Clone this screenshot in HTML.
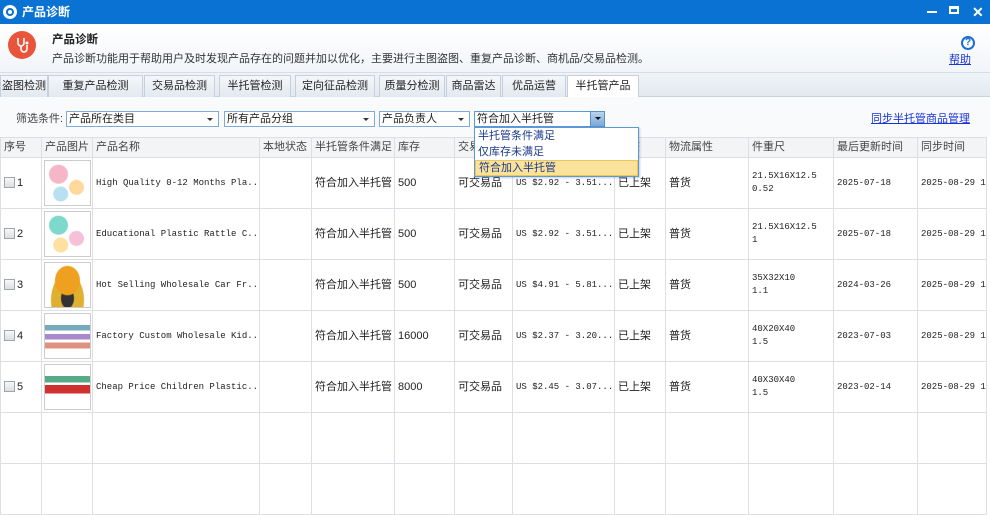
<!DOCTYPE html>
<html><head><meta charset="utf-8"><style>
*{margin:0;padding:0;box-sizing:border-box}
body{width:990px;height:495px;overflow:hidden;background:#fff;font-family:"Liberation Sans","Noto Sans CJK SC",sans-serif;font-size:11px;line-height:14px;color:#222;position:relative}
.abs{position:absolute;white-space:nowrap}
.title{left:0;top:0;width:990px;height:24px;background:#0a72d2;color:#fff;font-size:12px}
.hdr{left:0;top:24px;width:990px;height:49px;background:linear-gradient(#fff,#f1f5f9);border-bottom:1px solid #d5dee8}
.tabs{left:0;top:73px;width:990px;height:24px;background:linear-gradient(#f0f4f8,#e2e9f0);border-bottom:1px solid #c7d3df}
.tab{position:absolute;top:2px;height:22px;background:linear-gradient(#f4f7fa,#e3e9f0);border:1px solid #c5d0dc;border-bottom:none;text-align:center;line-height:21px;font-size:11px;white-space:nowrap;overflow:hidden}
.tab.on{background:#fff;height:23px}
.filt{left:0;top:97px;width:990px;height:40px;background:#f8fafc}
.sel{position:absolute;top:111px;height:16px;background:#fff;border:1px solid #7fa9d6;font-size:11px;line-height:14px;padding-left:2px;white-space:nowrap}
.sel:after{content:"";position:absolute;right:5px;top:6px;border:3px solid transparent;border-top:3px solid #333}
table{position:absolute;left:0;top:137px;border-collapse:collapse;table-layout:fixed;width:986px}
td,th{border:1px solid #dcdfe3;font-weight:normal;text-align:left;padding:0 0 0 3px;white-space:nowrap;overflow:hidden;font-size:11px;line-height:13px}
th{height:20px;background:#f3f4f6;color:#444}
td{height:51px}
.m{font-family:"Liberation Mono",monospace;font-size:9px;text-overflow:clip}
.cb{display:inline-block;width:11px;height:11px;border:1px solid #9aa;background:linear-gradient(#f8f8f8,#ddd);vertical-align:-2px;margin-right:2px}
.img{width:47px;height:46px;border:1px solid #ccc;margin-left:-1px;background:#fff;position:relative;overflow:hidden}
</style></head><body>
<div class="abs title">
 <div class="abs" style="left:3px;top:5px;width:14px;height:14px;border-radius:50%;background:#fff"></div>
 <div class="abs" style="left:6px;top:8px;width:8px;height:8px;border-radius:50%;border:2px solid #0a72d2"></div>
 <div class="abs" style="left:22px;top:4px;font-weight:bold;line-height:16px">产品诊断</div>
 <div class="abs" style="left:927px;top:11px;width:10px;height:2px;background:#fff"></div>
 <div class="abs" style="left:949px;top:6px;width:10px;height:8px;border:2px solid #fff;border-top-width:3px"></div>
 <div class="abs" style="left:972px;top:4px;font-size:14px;line-height:16px;font-weight:bold">✕</div>
</div>
<div class="abs hdr">
 <div class="abs" style="left:8px;top:7px;width:28px;height:28px;border-radius:50%;background:#e8553a"></div>
 <svg class="abs" style="left:13px;top:12px" width="18" height="18" viewBox="0 0 18 18"><path d="M5 2v5a3 3 0 0 0 6 0V2M8 10v3a3 3 0 0 0 6 0v-4" fill="none" stroke="#fff" stroke-width="1.6"/><circle cx="14" cy="7" r="1.5" fill="#fff"/></svg>
 <div class="abs" style="left:52px;top:9px;font-weight:bold;font-size:11.5px">产品诊断</div>
 <div class="abs" style="left:52px;top:28px;font-size:11px;color:#333">产品诊断功能用于帮助用户及时发现产品存在的问题并加以优化，主要进行主图盗图、重复产品诊断、商机品/交易品检测。</div>
 <div class="abs" style="left:961px;top:12px;width:14px;height:14px;border-radius:50%;border:2px solid #1c6ed1;color:#1c6ed1;font-size:10px;font-weight:bold;text-align:center;line-height:10px">?</div>
 <div class="abs" style="left:949px;top:29px;color:#1a33d6;text-decoration:underline;font-size:11px">帮助</div>
</div>
<div class="abs tabs">
 <div class="tab" style="left:0;width:48px">盗图检测</div>
 <div class="tab" style="left:48px;width:95px">重复产品检测</div>
 <div class="tab" style="left:144px;width:71px">交易品检测</div>
 <div class="tab" style="left:219px;width:72px">半托管检测</div>
 <div class="tab" style="left:295px;width:80px">定向征品检测</div>
 <div class="tab" style="left:379px;width:66px">质量分检测</div>
 <div class="tab" style="left:446px;width:55px">商品雷达</div>
 <div class="tab" style="left:502px;width:64px">优品运营</div>
 <div class="tab on" style="left:567px;width:72px">半托管产品</div>
</div>
<div class="abs filt"></div>
<div class="abs" style="left:16px;top:112px;color:#444">筛选条件:</div>
<div class="sel" style="left:66px;width:153px">产品所在类目</div>
<div class="sel" style="left:224px;width:151px">所有产品分组</div>
<div class="sel" style="left:379px;width:91px">产品负责人</div>
<div class="sel" style="left:474px;width:131px;border-color:#5b9ad8">符合加入半托管</div>
<div class="abs" style="left:590px;top:111px;width:15px;height:16px;background:linear-gradient(#b9d4ee,#7aa9d8);border:1px solid #5b8fc8"></div>
<div class="abs" style="left:595px;top:117px;border:3px solid transparent;border-top:3px solid #111"></div>
<div class="abs" style="left:871px;top:112px;color:#1a33d6;text-decoration:underline;font-size:11px">同步半托管商品管理</div>
<table>
<colgroup><col style="width:41px"><col style="width:51px"><col style="width:167px"><col style="width:52px"><col style="width:83px"><col style="width:60px"><col style="width:58px"><col style="width:102px"><col style="width:51px"><col style="width:83px"><col style="width:85px"><col style="width:84px"><col style="width:69px"></colgroup>
<tr><th>序号</th><th>产品图片</th><th>产品名称</th><th>本地状态</th><th>半托管条件满足</th><th>库存</th><th>交易</th><th>价格</th><th>状态</th><th>物流属性</th><th>件重尺</th><th>最后更新时间</th><th>同步时间</th></tr>
<tr><td><span class="cb"></span>1</td><td><div class="img" style="background:radial-gradient(circle at 30% 30%,#f5b6c8 0 9px,transparent 10px),radial-gradient(circle at 70% 60%,#ffd89c 0 7px,transparent 8px),radial-gradient(circle at 35% 75%,#b8e0f0 0 7px,transparent 8px),#fff"></div></td><td class="m">High Quality 0-12 Months Pla...</td><td></td><td>符合加入半托管</td><td>500</td><td>可交易品</td><td class="m">US $2.92 - 3.51...</td><td>已上架</td><td>普货</td><td class="m">21.5X16X12.5<br>0.52</td><td class="m">2025-07-18</td><td class="m">2025-08-29 16</td></tr>
<tr><td><span class="cb"></span>2</td><td><div class="img" style="background:radial-gradient(circle at 30% 30%,#7fd8cc 0 9px,transparent 10px),radial-gradient(circle at 70% 60%,#f6c0d8 0 7px,transparent 8px),radial-gradient(circle at 35% 75%,#ffe0a0 0 7px,transparent 8px),#fff"></div></td><td class="m">Educational Plastic Rattle C...</td><td></td><td>符合加入半托管</td><td>500</td><td>可交易品</td><td class="m">US $2.92 - 3.51...</td><td>已上架</td><td>普货</td><td class="m">21.5X16X12.5<br>1</td><td class="m">2025-07-18</td><td class="m">2025-08-29 16</td></tr>
<tr><td><span class="cb"></span>3</td><td><div class="img" style="background:radial-gradient(ellipse at 50% 40%,#f0a020 0 12px,transparent 13px),radial-gradient(ellipse at 50% 80%,#333 0 6px,transparent 7px),radial-gradient(ellipse at 50% 85%,#e0b030 0 16px,transparent 17px),#fff"></div></td><td class="m">Hot Selling Wholesale Car Fr...</td><td></td><td>符合加入半托管</td><td>500</td><td>可交易品</td><td class="m">US $4.91 - 5.81...</td><td>已上架</td><td>普货</td><td class="m">35X32X10<br>1.1</td><td class="m">2024-03-26</td><td class="m">2025-08-29 16</td></tr>
<tr><td><span class="cb"></span>4</td><td><div class="img" style="background:linear-gradient(#fff 25%,#7ab 25% 38%,#fff 38% 45%,#a8c 45% 58%,#fff 58% 65%,#e09080 65% 78%,#fff 78%)"></div></td><td class="m">Factory Custom Wholesale Kid...</td><td></td><td>符合加入半托管</td><td>16000</td><td>可交易品</td><td class="m">US $2.37 - 3.20...</td><td>已上架</td><td>普货</td><td class="m">40X20X40<br>1.5</td><td class="m">2023-07-03</td><td class="m">2025-08-29 16</td></tr>
<tr><td><span class="cb"></span>5</td><td><div class="img" style="background:linear-gradient(#fff 25%,#5a8 25% 40%,#fff 40% 45%,#d03030 45% 65%,#fff 65%)"></div></td><td class="m">Cheap Price Children Plastic...</td><td></td><td>符合加入半托管</td><td>8000</td><td>可交易品</td><td class="m">US $2.45 - 3.07...</td><td>已上架</td><td>普货</td><td class="m">40X30X40<br>1.5</td><td class="m">2023-02-14</td><td class="m">2025-08-29 16</td></tr>
<tr><td></td><td></td><td></td><td></td><td></td><td></td><td></td><td></td><td></td><td></td><td></td><td></td><td></td></tr>
<tr><td></td><td></td><td></td><td></td><td></td><td></td><td></td><td></td><td></td><td></td><td></td><td></td><td></td></tr>
</table>
<div class="abs" style="left:474px;top:127px;width:165px;height:50px;background:#fff;border:1px solid #5b9ad8;box-shadow:1px 1px 2px rgba(0,0,0,.2)">
 <div style="padding-left:3px;height:16px;line-height:16px;color:#1a3a8a">半托管条件满足</div>
 <div style="padding-left:3px;height:16px;line-height:16px;color:#1a3a8a">仅库存未满足</div>
 <div style="padding-left:3px;height:16px;line-height:14px;background:#fbe29a;border:1px solid #e8c860;color:#1a3a8a">符合加入半托管</div>
</div>
</body></html>
